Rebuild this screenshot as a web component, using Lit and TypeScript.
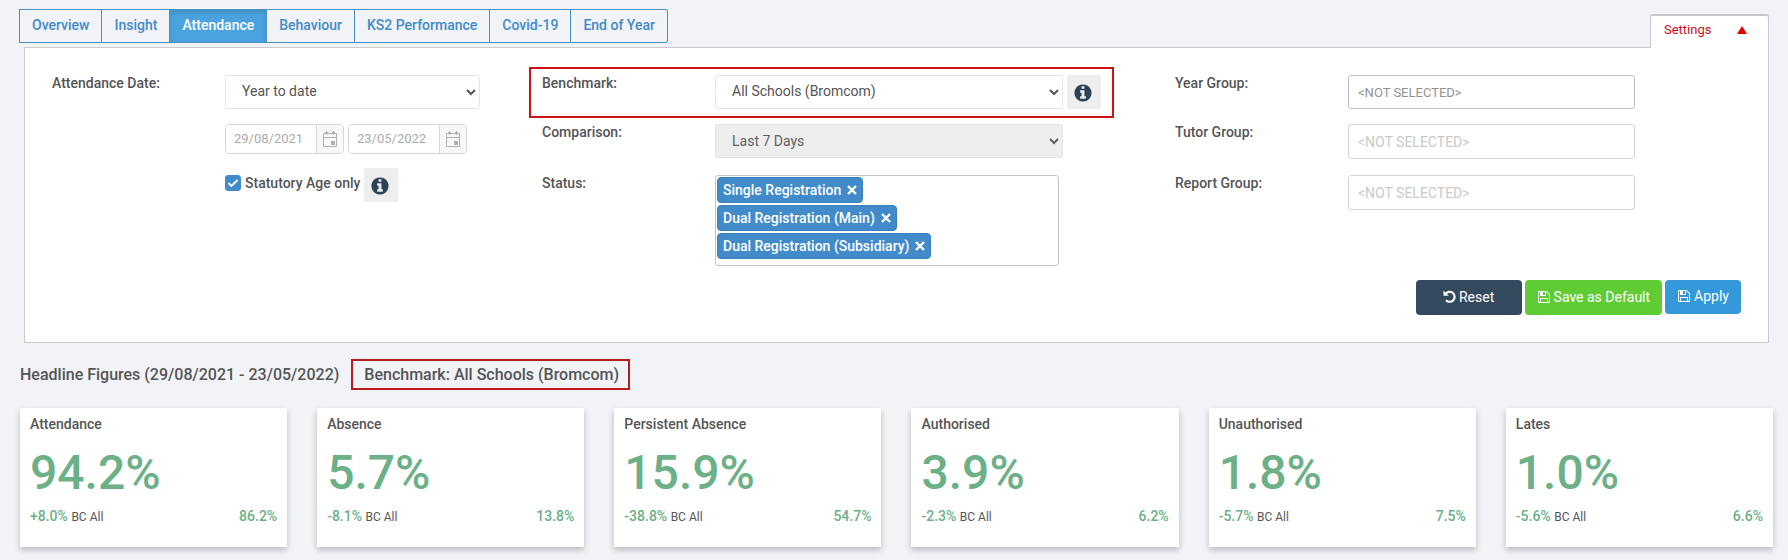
import { LitElement, html, css, svg } from "lit";
import { customElement, property, state } from "lit/decorators.js";
import { classMap } from "lit/directives/class-map.js";

const ICONS: Record<string, string> = {
  info: "M1152 1376v-160q0-14-9-23t-23-9h-96v-512q0-14-9-23t-23-9h-320q-14 0-23 9t-9 23v160q0 14 9 23t23 9h96v320h-96q-14 0-23 9t-9 23v160q0 14 9 23t23 9h448q14 0 23-9t9-23zm-128-896v-160q0-14-9-23t-23-9h-192q-14 0-23 9t-9 23v160q0 14 9 23t23 9h192q14 0 23-9t9-23zm640 416q0 209-103 385.5t-279.5 279.5-385.5 103-385.5-103-279.5-279.5-103-385.5 103-385.5 279.5-279.5 385.5-103 385.5 103 279.5 279.5 103 385.5z",
  save: "M512 1536h768v-384h-768v384zm896 0h128v-896q0-14-10-38.5t-20-34.5l-281-281q-10-10-34-20t-39-10v416q0 40-28 68t-68 28h-576q-40 0-68-28t-28-68v-416h-128v1280h128v-416q0-40 28-68t68-28h832q40 0 68 28t28 68v416zm-384-928v-320q0-13-9.5-22.5t-22.5-9.5h-192q-13 0-22.5 9.5t-9.5 22.5v320q0 13 9.5 22.5t22.5 9.5h192q13 0 22.5-9.5t9.5-22.5zm640 32v928q0 40-28 68t-68 28h-1344q-40 0-68-28t-28-68v-1344q0-40 28-68t68-28h928q40 0 88 20t76 48l280 280q28 28 48 76t20 88z",
};

const icon = (name: string, size: number) => html`<svg
  class="icon"
  width=${size}
  height=${size}
  viewBox="0 0 1792 1792"
  aria-hidden="true"
>${svg`<path fill="currentColor" d=${ICONS[name]}></path>`}</svg>`;

const undoIcon = html`<svg class="icon" width="13" height="13" viewBox="0 0 13 13" aria-hidden="true">
  <path d="M2.600 3.800A5 5 0 1 1 3 10.200" fill="none" stroke="currentColor" stroke-width="2.200"></path>
  <path d="M0.500 0.500v5.300h5.300z" fill="currentColor"></path>
</svg>`;

const crossIcon = html`<svg class="icon" width="10" height="10" viewBox="0 0 10 10" aria-hidden="true">
  <path d="M1 1l8 8M9 1l-8 8" fill="none" stroke="currentColor" stroke-width="2.400"></path>
</svg>`;

const calendarIcon = html`<svg class="icon" width="16" height="16" viewBox="0 0 16 16" aria-hidden="true">
  <path d="M1.500 2.500h13v13h-13zM1.500 6.500h13M4.500 0v4M11.500 0v4M3 1.500h3M10 1.500h3" fill="none" stroke="currentColor"></path>
  <path d="M9 10h4v4H9z" fill="currentColor"></path>
</svg>`;

interface Figure {
  title: string;
  value: string;
  change: string;
  benchmark: string;
}

const FIGURES: Figure[] = [
  { title: "Attendance", value: "94.2%", change: "+8.0%", benchmark: "86.2%" },
  { title: "Absence", value: "5.7%", change: "-8.1%", benchmark: "13.8%" },
  { title: "Persistent Absence", value: "15.9%", change: "-38.8%", benchmark: "54.7%" },
  { title: "Authorised", value: "3.9%", change: "-2.3%", benchmark: "6.2%" },
  { title: "Unauthorised", value: "1.8%", change: "-5.7%", benchmark: "7.5%" },
  { title: "Lates", value: "1.0%", change: "-5.6%", benchmark: "6.6%" },
];

const TABS = ["Overview", "Insight", "Attendance", "Behaviour", "KS2 Performance", "Covid-19", "End of Year"];

@customElement("figure-card")
export class FigureCard extends LitElement {
  @property({ attribute: false }) figure!: Figure;

  static styles = css`
    :host {
      display: block;
      box-sizing: border-box;
      padding: 8px 10px 21px;
      background: #fff;
      box-shadow: 0 3px 6px rgba(0, 0, 0, 0.24);
    }
    .title {
      margin: 0;
      font-size: 14px;
      line-height: 16px;
      font-weight: 500;
    }
    .value {
      margin: 21px 0 14px;
      font-size: 48px;
      line-height: 40px;
      font-weight: 500;
      color: #6cb087;
    }
    .foot {
      display: flex;
      align-items: baseline;
      justify-content: space-between;
      line-height: 18px;
      font-size: 14px;
    }
    .green {
      font-weight: 500;
      color: #6cb087;
    }
    .note {
      font-size: 12px;
    }
  `;

  render() {
    const f = this.figure;
    return html`
      <h3 class="title">${f.title}</h3>
      <p class="value">${f.value}</p>
      <div class="foot">
        <span><span class="green">${f.change}</span> <span class="note">BC All</span></span>
        <span class="green">${f.benchmark}</span>
      </div>
    `;
  }
}

@customElement("app-root")
export class AppRoot extends LitElement {
  @state() private tab = "Attendance";
  @state() private open = true;
  @state() private statuses = ["Single Registration", "Dual Registration (Main)", "Dual Registration (Subsidiary)"];

  static styles = css`
    :host {
      display: block;
      box-sizing: border-box;
      min-height: 100vh;
      padding: 9px 15px 13px 19px;
      background: #f1f3f7;
      color: #555557;
      font: 400 14px/20px Roboto, "Liberation Sans", sans-serif;
    }
    *,
    *::before,
    *::after {
      box-sizing: border-box;
    }
    button,
    input,
    select {
      margin: 0;
      font: inherit;
      color: inherit;
    }
    button {
      cursor: pointer;
    }
    .icon {
      display: block;
      flex: none;
    }
    .top {
      display: flex;
      justify-content: space-between;
      align-items: flex-end;
      padding-right: 4px;
    }
    .tabs {
      display: flex;
      align-self: flex-start;
      height: 34px;
      margin-bottom: 4px;
    }
    .tab {
      padding: 0 12px 2px;
      border: 1px solid #4a90c4;
      border-left-width: 0;
      background: none;
      color: #428bca;
      font-weight: 500;
    }
    .tab:first-child {
      border-left-width: 1px;
    }
    .tab:last-child {
      border-radius: 0 3px 3px 0;
    }
    .tab.active {
      background: #4aa3df;
      color: #fff;
      box-shadow: inset 0 3px 5px rgba(0, 0, 0, 0.125);
    }
    .toggle {
      display: flex;
      align-items: center;
      justify-content: space-between;
      position: relative;
      z-index: 1;
      width: 119px;
      height: 34px;
      margin-bottom: -1px;
      padding: 0 21px 5px 13px;
      border: 1px solid #c6c9cf;
      border-width: 2px 1px 0;
      border-radius: 3px 3px 0 0;
      background: #fff;
      color: #cc0f16;
      font-size: 13px;
    }
    .panel {
      margin: 0 4px 0 5px;
      padding: 27px 27px 27px;
      border: 1px solid #c9cbd0;
      background: #fff;
    }
    .filters {
      display: grid;
      grid-template-columns: 490fr 633fr 566fr;
      margin: 0;
    }
    .col {
      display: grid;
      grid-template-columns: 173px 1fr;
      grid-template-rows: 34px 36px auto;
      row-gap: 15px;
      align-items: start;
    }
    .dates {
      padding-right: 62px;
    }
    .compare {
      padding-right: 74px;
    }
    .groups {
      padding-right: 106px;
    }
    .row {
      display: grid;
      grid-column: 1 / -1;
      grid-template-columns: subgrid;
      align-items: start;
      position: relative;
    }
    .marked::after {
      content: "";
      position: absolute;
      inset: -8px -13px -9px;
      border: 2px solid #cf1216;
      pointer-events: none;
    }
    .label {
      line-height: 16px;
      font-weight: 500;
    }
    .field {
      display: flex;
      align-items: flex-start;
      gap: 4px;
      grid-column: 2;
      min-width: 0;
    }
    .select {
      flex: 1;
      min-width: 0;
      height: 34px;
      padding: 0 0 2px 12px;
      border: 1px solid #e3e4e7;
      border-radius: 3px;
      background: #fff;
    }
    .select:disabled {
      padding-bottom: 0;
      background: #eee;
      opacity: 1;
      color: #5e5f61;
    }
    .short {
      margin-right: 38px;
    }
    .date {
      display: flex;
      width: 119px;
      height: 30px;
      border: 1px solid #d6d7d9;
      border-radius: 4px;
      overflow: hidden;
    }
    .date-text {
      flex: 1;
      min-width: 0;
      padding: 0 8px;
      border: 0;
      background: #fff;
      color: #ababad;
      font-size: 13px;
    }
    .date-button {
      display: grid;
      place-items: center;
      width: 27px;
      padding: 0;
      border: 0;
      border-left: 1px solid #d6d7d9;
      background: #f8f8f8;
      color: #b1b1b1;
    }
    .check {
      display: flex;
      align-items: center;
      gap: 4px;
      height: 16px;
      font-weight: 500;
    }
    .box {
      appearance: none;
      width: 16px;
      height: 16px;
      border-radius: 3px;
      background: #fff;
      border: 1px solid #428bca;
    }
    .box:checked {
      background: #428bca url("data:image/svg+xml,%3Csvg xmlns='http://www.w3.org/2000/svg' viewBox='0 0 14 14'%3E%3Cpath d='M2.500 7l3 3 6-6' fill='none' stroke='white' stroke-width='1.900'/%3E%3C/svg%3E") center / 14px no-repeat;
    }
    .lifted {
      margin-top: -7px;
    }
    .info {
      display: grid;
      place-items: center;
      width: 34px;
      height: 34px;
      padding: 2px 2px 0 0;
      border: 0;
      background: #eee;
      color: #2c4257;
    }
    .chips {
      display: flex;
      flex-direction: column;
      align-items: flex-start;
      flex: 1;
      gap: 2px;
      min-height: 91px;
      margin-right: 42px;
      padding: 1px;
      border: 1px solid #c2c4c8;
      border-radius: 3px;
    }
    .chip {
      display: flex;
      align-items: center;
      gap: 6px;
      height: 26px;
      padding: 0 5px;
      border: 1px solid #3a7fb9;
      border-radius: 4px;
      background: #428bca;
      color: #fff;
      font-weight: 500;
    }
    .remove {
      padding: 0;
      border: 0;
      background: none;
    }
    .text {
      flex: 1;
      min-width: 0;
      height: 35px;
      padding: 0 9px;
      border: 1px solid #d3d4d8;
      border-radius: 3px;
      background: #fff;
    }
    .text::placeholder {
      color: #c9c9cb;
      opacity: 1;
    }
    .ready {
      height: 34px;
      border-color: #bfc1c6;
      font-size: 13px;
    }
    .ready::placeholder {
      color: #929294;
    }
    .actions {
      display: flex;
      justify-content: flex-end;
      gap: 3px;
      margin-top: 14px;
    }
    .action {
      display: flex;
      align-items: center;
      justify-content: center;
      gap: 3px;
      height: 35px;
      padding: 0 12px 2px;
      border: 0;
      border-radius: 4px;
      color: #fff;
    }
    .reset {
      min-width: 106px;
      background: #34495e;
    }
    .save {
      background: #5fcc33;
    }
    .apply {
      height: 34px;
      background: #3598db;
    }
    .headline {
      display: flex;
      align-items: center;
      gap: 12px;
      margin: 16px 0 18px 1px;
      font-size: 16px;
      line-height: 27px;
      font-weight: 500;
    }
    .heading {
      margin: 0;
      font-size: inherit;
      font-weight: inherit;
    }
    .badge {
      padding: 0 9px 0 11px;
      border: 2px solid #b9181f;
    }
    .cards {
      display: grid;
      grid-template-columns: repeat(6, 1fr);
      gap: 30px;
      margin-left: 1px;
    }
  `;

  private info(label: string) {
    return html`<button class="info" type="button" aria-label=${label}>${icon("info", 20)}</button>`;
  }

  private date(value: string, label: string) {
    return html`<div class="date">
      <input class="date-text" type="text" .value=${value} aria-label=${label} disabled />
      <button class="date-button" type="button" aria-label="Open calendar" disabled>${calendarIcon}</button>
    </div>`;
  }

  private panel() {
    return html`<section class="panel">
      <div class="filters">
        <div class="col dates">
          <div class="row">
            <label class="label" for="range">Attendance Date:</label>
            <div class="field">
              <select class="select" id="range"><option>Year to date</option></select>
            </div>
          </div>
          <div class="row">
            <div class="field">${this.date("29/08/2021", "From")}${this.date("23/05/2022", "To")}</div>
          </div>
          <div class="row">
            <div class="field">
              <label class="check"><input class="box" type="checkbox" checked />Statutory Age only</label>
              <div class="lifted">${this.info("About statutory age")}</div>
            </div>
          </div>
        </div>
        <div class="col compare">
          <div class="row marked">
            <label class="label" for="benchmark">Benchmark:</label>
            <div class="field">
              <select class="select" id="benchmark"><option>All Schools (Bromcom)</option></select>
              ${this.info("About benchmarks")}
            </div>
          </div>
          <div class="row">
            <label class="label" for="comparison">Comparison:</label>
            <div class="field">
              <select class="select short" id="comparison" disabled><option>Last 7 Days</option></select>
            </div>
          </div>
          <div class="row">
            <span class="label" id="status">Status:</span>
            <div class="field">
              <div class="chips" role="group" aria-labelledby="status">
                ${this.statuses.map(
                  (s) => html`<span class="chip">${s}<button
                      class="remove"
                      type="button"
                      aria-label="Remove ${s}"
                      @click=${() => (this.statuses = this.statuses.filter((x) => x !== s))}
                    >${crossIcon}</button></span>`
                )}
              </div>
            </div>
          </div>
        </div>
        <div class="col groups">
          <div class="row">
            <label class="label" for="year">Year Group:</label>
            <div class="field"><input class="text ready" id="year" type="text" placeholder="<NOT SELECTED>" /></div>
          </div>
          <div class="row">
            <label class="label" for="tutor">Tutor Group:</label>
            <div class="field"><input class="text" id="tutor" type="text" placeholder="<NOT SELECTED>" disabled /></div>
          </div>
          <div class="row">
            <label class="label" for="report">Report Group:</label>
            <div class="field"><input class="text" id="report" type="text" placeholder="<NOT SELECTED>" disabled /></div>
          </div>
        </div>
      </div>
      <div class="actions">
        <button class="action reset" type="button">${undoIcon}Reset</button>
        <button class="action save" type="button">${icon("save", 14)}Save as Default</button>
        <button class="action apply" type="button">${icon("save", 14)}Apply</button>
      </div>
    </section>`;
  }

  render() {
    return html`
      <header class="top">
        <nav class="tabs">
          ${TABS.map(
            (t) => html`<button
              type="button"
              class=${classMap({ tab: true, active: t === this.tab })}
              @click=${() => (this.tab = t)}
            >${t}</button>`
          )}
        </nav>
        <button class="toggle" type="button" aria-expanded=${this.open} @click=${() => (this.open = !this.open)}>
          Settings
          <svg class="icon" width="10" height="8" viewBox="0 0 10 8" aria-hidden="true">
            <path d="M5 0l5 8H0z" fill="#e00000"></path>
          </svg>
        </button>
      </header>
      ${this.open ? this.panel() : null}
      <div class="headline">
        <h2 class="heading">Headline Figures (29/08/2021 - 23/05/2022)</h2>
        <span class="badge">Benchmark: All Schools (Bromcom)</span>
      </div>
      <main class="cards">
        ${FIGURES.map((f) => html`<figure-card .figure=${f}></figure-card>`)}
      </main>
    `;
  }
}
